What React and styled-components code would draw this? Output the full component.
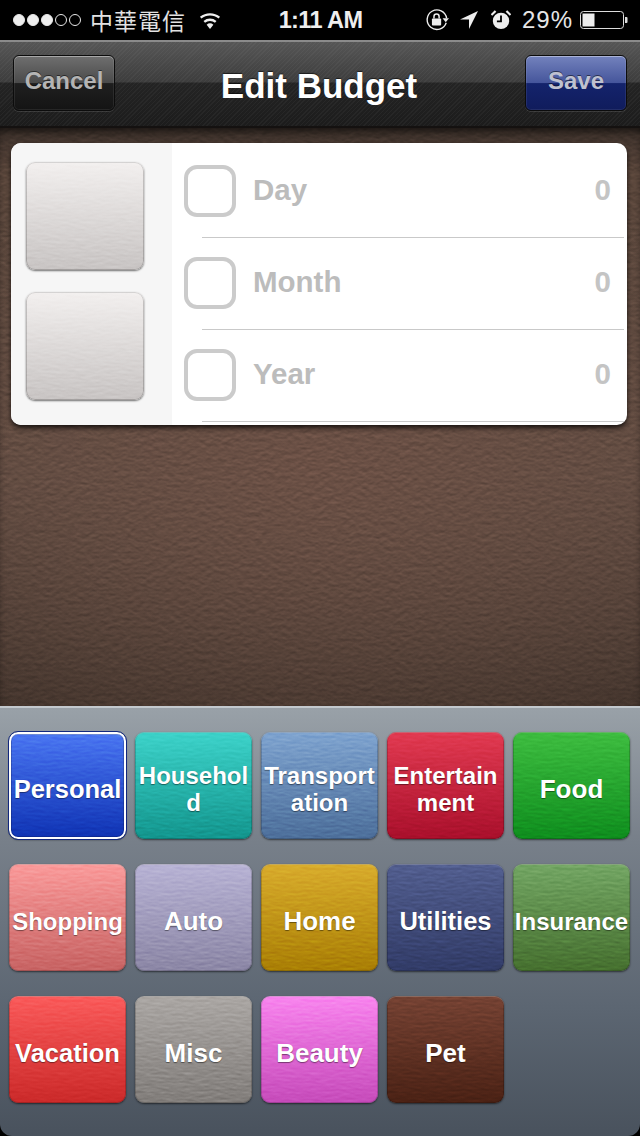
import styled, { createGlobalStyle } from "styled-components";

const noise = (freqX, freqY, scale, seed) =>
  `url("data:image/svg+xml,${encodeURIComponent(
    `<svg xmlns='http://www.w3.org/2000/svg' width='400' height='400'><filter id='n' x='0' y='0' width='100%' height='100%' color-interpolation-filters='sRGB'><feTurbulence type='fractalNoise' baseFrequency='${freqX} ${freqY}' numOctaves='4' seed='${seed}' stitchTiles='stitch'/><feDiffuseLighting surfaceScale='${scale}' lighting-color='#fff' diffuseConstant='1'><feDistantLight azimuth='90' elevation='30'/></feDiffuseLighting></filter><rect width='400' height='400' filter='url(#n)'/></svg>`
  )}")`;

const leather = noise(0.16, 0.24, 0.2, 4);
const paper = noise(0.1, 0.36, 0.14, 9);

const GlobalStyle = createGlobalStyle`
  html, body {
    margin: 0;
    padding: 0;
    background: #000;
  }
  * {
    box-sizing: border-box;
  }
`;

const Screen = styled.div`
  width: 640px;
  height: 1136px;
  display: flex;
  flex-direction: column;
  overflow: hidden;
  background: #000;
  font-family: "Liberation Sans", Arial, sans-serif;
`;

const StatusBar = styled.div`
  height: 40px;
  flex-shrink: 0;
  display: grid;
  grid-template-columns: 1fr auto 1fr;
  align-items: center;
  padding: 0 12px 0 13px;
  background: #000;
  color: #e8e8e8;
`;

const StatusLeft = styled.div`
  display: flex;
  align-items: center;
`;

const StatusRight = styled.div`
  display: flex;
  align-items: center;
  justify-content: flex-end;
`;

const SignalDots = styled.div`
  display: flex;
  gap: 2px;
  margin-right: 9px;
`;

const Dot = styled.span`
  width: 12px;
  height: 12px;
  border-radius: 50%;
  border: 1px solid #e8e8e8;
  background: ${(p) => (p.$on ? "#eee" : "transparent")};
`;

const Carrier = styled.span`
  font-family: "Noto Sans CJK TC", "Liberation Sans", sans-serif;
  font-size: 23px;
  letter-spacing: 1px;
  color: #e2e2e2;
  margin-right: 13px;
`;

const Clock = styled.span`
  font-size: 23.5px;
  font-weight: 700;
  letter-spacing: -0.6px;
  color: #eee;
  padding-top: 1px;
`;

const Percent = styled.span`
  font-size: 24px;
  color: #e6e6e6;
  letter-spacing: 1px;
  margin-right: 7px;
`;

const Spacer = styled.span`
  width: ${(p) => p.$w}px;
`;

const NavBar = styled.div`
  height: 88px;
  flex-shrink: 0;
  display: grid;
  grid-template-columns: 102px 1fr 102px;
  align-items: center;
  padding: 0 13px;
  border-top: 2px solid #8b8b8b;
  border-bottom: 2px solid #141110;
  background:
    repeating-linear-gradient(-45deg, rgba(255, 255, 255, 0.035) 0 1px, transparent 1px 3px),
    linear-gradient(#565656 0, #3d3d3d 40px, #242424 41px, #1c1c1c 100%);
`;

const NavTitle = styled.div`
  text-align: center;
  color: #fff;
  font-size: 35px;
  font-weight: 700;
  padding: 3px 2px 0 0;
  text-shadow: 0 -1px 1px rgba(0, 0, 0, 0.6);
`;

const NavButton = styled.div`
  height: 56px;
  margin-top: -3px;
  display: flex;
  align-items: center;
  justify-content: center;
  border-radius: 6px;
  border: 1px solid #0c0c0c;
  font-size: 24px;
  font-weight: 700;
  padding-bottom: 3px;
  color: ${(p) => p.$text};
  background: linear-gradient(${(p) => p.$top} 0, ${(p) => p.$mid} 50%, ${(p) => p.$low} 51%, ${(p) => p.$bottom} 100%);
  box-shadow:
    inset 0 1px 0 rgba(255, 255, 255, 0.35),
    inset 0 0 0 1px rgba(255, 255, 255, 0.08),
    0 1px 0 rgba(255, 255, 255, 0.12);
  text-shadow: 0 -1px 0 rgba(0, 0, 0, 0.5);
`;

const Leather = styled.div`
  height: 578px;
  flex-shrink: 0;
  padding: 15px 13px 0 11px;
  background-image:
    ${leather},
    radial-gradient(ellipse 520px 300px at 50% 58%, #6b5045 0, rgba(95, 75, 64, 0) 100%),
    linear-gradient(#3a2f29 0, #5b473c 8%, #5d4a40 60%, #44352d 100%);
  background-blend-mode: overlay, normal, normal;
  box-shadow: inset 0 6px 8px -3px rgba(0, 0, 0, 0.6);
`;

const Card = styled.div`
  height: 282px;
  display: grid;
  grid-template-columns: 161px 1fr;
  border-radius: 10px;
  overflow: hidden;
  background: #fff;
  box-shadow: 0 3px 5px rgba(0, 0, 0, 0.75);
`;

const BlankColumn = styled.div`
  display: flex;
  flex-direction: column;
  gap: 22px;
  padding: 19px 0 0 15px;
  background: #f6f6f6;
`;

const Rows = styled.div`
  padding: 3px 3px 0 0;
`;

const Row = styled.div`
  position: relative;
  height: 92px;
  display: flex;
  align-items: center;
  padding: 0 13px 2px 12px;
  &::after {
    content: "";
    position: absolute;
    left: 30px;
    right: 0;
    bottom: 0;
    height: 1px;
    background: #c9c9c9;
  }
`;

const Check = styled.div`
  width: 52px;
  height: 52px;
  flex-shrink: 0;
  border: 4px solid #cbcbcb;
  border-radius: 13px;
  margin-right: 17px;
`;

const RowLabel = styled.span`
  flex: 1;
  font-size: 29.5px;
  font-weight: 700;
  color: #bcbcbc;
  margin-top: -2px;
`;

const RowValue = styled.span`
  font-size: 29.5px;
  font-weight: 700;
  color: #c4c4c4;
  margin: -2px 0 0;
`;

const Panel = styled.div`
  flex: 1;
  display: grid;
  grid-template-columns: repeat(5, 117px);
  grid-auto-rows: 107px;
  column-gap: 9px;
  row-gap: 25px;
  align-content: start;
  padding: 24px 0 0 9px;
  border-top: 2px solid #c3c9ce;
  border-radius: 0 0 12px 12px;
  background: linear-gradient(#99a1a8 0, #78808a 30%, #5c6672 70%, #49525d 100%);
`;

const Tile = styled.div`
  width: ${(p) => p.$w || 117}px;
  height: ${(p) => p.$h || 107}px;
  display: flex;
  align-items: center;
  justify-content: center;
  padding-top: 7px;
  border-radius: 9px;
  font-size: ${(p) => p.$size || 26}px;
  font-weight: 700;
  line-height: 27px;
  text-align: center;
  white-space: pre-line;
  color: #fff;
  text-shadow: 0 1px 1px rgba(0, 0, 0, 0.45);
  background-image:
    ${paper},
    linear-gradient(${(p) => p.$top}, ${(p) => p.$bottom});
  background-blend-mode: overlay, normal;
  box-shadow:
    inset 0 1px 0 rgba(255, 255, 255, 0.25),
    inset 0 0 0 1px rgba(0, 0, 0, 0.18),
    0 1px 2px rgba(0, 0, 0, 0.55);
  ${(p) =>
    p.$active &&
    `
    border: 2px solid #fff;
    outline: 1px solid #12287e;
  `}
`;

const tiles = [
  { label: "Personal", top: "#4a76f2", bottom: "#0f33b4", active: true, size: 25.5 },
  { label: "Househol\nd", top: "#3dd3ca", bottom: "#12958d", size: 24 },
  { label: "Transport\nation", top: "#7fa4d0", bottom: "#4c6e9a", size: 24 },
  { label: "Entertain\nment", top: "#e23a51", bottom: "#a90f2b", size: 24 },
  { label: "Food", top: "#3ebd40", bottom: "#0e8d1d" },
  { label: "Shopping", top: "#fb9b9b", bottom: "#c76363", size: 24 },
  { label: "Auto", top: "#b8b3d5", bottom: "#8b86a5" },
  { label: "Home", top: "#d9ac2c", bottom: "#a97e04" },
  { label: "Utilities", top: "#525e8f", bottom: "#313b67", size: 25.5 },
  { label: "Insurance", top: "#73a664", bottom: "#456f2e", size: 24 },
  { label: "Vacation", top: "#fb5b5b", bottom: "#cb2929", size: 25.5 },
  { label: "Misc", top: "#aba7a4", bottom: "#817d7a" },
  { label: "Beauty", top: "#f985ef", bottom: "#c64bba" },
  { label: "Pet", top: "#754233", bottom: "#4a2114" },
];

const WifiIcon = () => (
  <svg width="22" height="17" viewBox="0 0 24 19">
    <path d="M12 19 8.2 14.2a6 6 0 0 1 7.6 0Z" fill="#eee" />
    <path d="M5.6 11a10 10 0 0 1 12.8 0" fill="none" stroke="#eee" strokeWidth="2.6" />
    <path d="M1.6 6.4a16 16 0 0 1 20.8 0" fill="none" stroke="#eee" strokeWidth="2.6" />
  </svg>
);

const RotationLockIcon = () => (
  <svg width="24" height="24" viewBox="0 0 26 26">
    <path d="M23 16a10.6 10.6 0 1 1 .4-5" fill="none" stroke="#eee" strokeWidth="1.5" />
    <path d="M19 11h7l-3.5 4.5Z" fill="#eee" />
    <rect x="7.5" y="11.5" width="10" height="7.5" rx="1" fill="#eee" />
    <path d="M9.7 11.5V9.4a2.8 2.8 0 0 1 5.6 0v2.1" fill="none" stroke="#eee" strokeWidth="1.6" />
  </svg>
);

const LocationIcon = () => (
  <svg width="18" height="18" viewBox="0 0 20 20">
    <path d="M20 0 0 9.5h10V20Z" fill="#eee" />
  </svg>
);

const AlarmIcon = () => (
  <svg width="20" height="20" viewBox="0 0 22 22">
    <circle cx="11" cy="12" r="9" fill="#eee" />
    <path d="M11 6v6.5H6.5" fill="none" stroke="#000" strokeWidth="2" />
    <path d="M0.5 5.5 5 1M21.5 5.5 17 1" stroke="#eee" strokeWidth="2.4" />
  </svg>
);

const BatteryIcon = () => (
  <svg width="48" height="18" viewBox="0 0 48 18">
    <rect x="0.5" y="0.5" width="43" height="17" rx="3" fill="none" stroke="#ddd" />
    <rect x="2.5" y="2.5" width="12" height="13" fill="#eee" />
    <path d="M45 6h1.5a1 1 0 0 1 1 1v4a1 1 0 0 1-1 1H45Z" fill="#ddd" />
  </svg>
);

export default function App() {
  return (
    <Screen>
      <GlobalStyle />
      <StatusBar>
        <StatusLeft>
          <SignalDots>
            <Dot $on />
            <Dot $on />
            <Dot $on />
            <Dot />
            <Dot />
          </SignalDots>
          <Carrier>中華電信</Carrier>
          <WifiIcon />
        </StatusLeft>
        <Clock>1:11 AM</Clock>
        <StatusRight>
          <RotationLockIcon />
          <Spacer $w={11} />
          <LocationIcon />
          <Spacer $w={13} />
          <AlarmIcon />
          <Spacer $w={11} />
          <Percent>29%</Percent>
          <BatteryIcon />
        </StatusRight>
      </StatusBar>

      <NavBar>
        <NavButton $text="#b4b4b4" $top="#6f6f6f" $mid="#4a4a4a" $low="#1f1f1f" $bottom="#141414">
          Cancel
        </NavButton>
        <NavTitle>Edit Budget</NavTitle>
        <NavButton $text="#bfc1d0" $top="#7382bd" $mid="#45559b" $low="#14236c" $bottom="#101c5c">
          Save
        </NavButton>
      </NavBar>

      <Leather>
        <Card>
          <BlankColumn>
            <Tile $w={118} $h={108} $top="#f3f0ef" $bottom="#c8c4c3" />
            <Tile $w={118} $h={108} $top="#f3f0ef" $bottom="#c8c4c3" />
          </BlankColumn>
          <Rows>
            {[
              ["Day", "0"],
              ["Month", "0"],
              ["Year", "0"],
            ].map(([label, value]) => (
              <Row key={label}>
                <Check />
                <RowLabel>{label}</RowLabel>
                <RowValue>{value}</RowValue>
              </Row>
            ))}
          </Rows>
        </Card>
      </Leather>

      <Panel>
        {tiles.map((t) => (
          <Tile key={t.label} $top={t.top} $bottom={t.bottom} $active={t.active} $size={t.size}>
            {t.label}
          </Tile>
        ))}
      </Panel>
    </Screen>
  );
}
